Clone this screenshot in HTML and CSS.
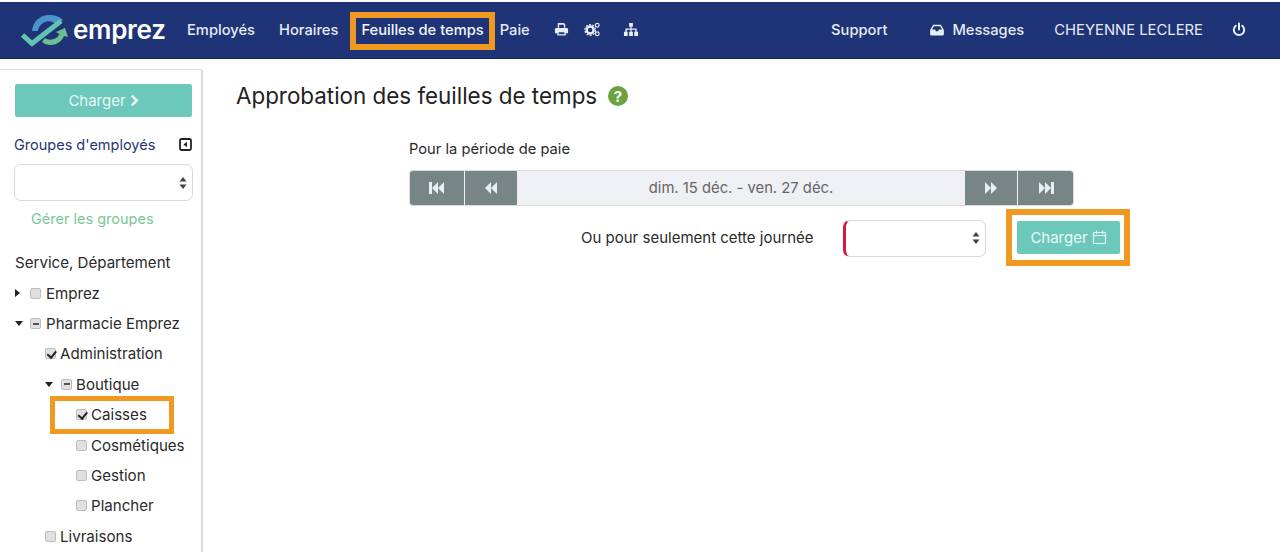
FILE: index.html
```html
<!DOCTYPE html>
<html lang="fr">
<head>
<meta charset="utf-8">
<title>Emprez</title>
<link rel="stylesheet" href="styles.css">
</head>
<body>
<nav class="topbar">
  <a class="logo">
    <svg class="logo-mark" viewBox="0 0 50 36" width="50" height="36">
      <path d="M12 19 C13 8 22 2 31 3 C36 3.500 40 5 43 8 L37 13 C33 9 27 8 23 11 C20 13 18 16 18 19 Z" fill="#4a94cc"/>
      <path d="M2.500 23 L12 31.500 L41 9" fill="none" stroke="#62c2b4" stroke-width="5"/>
      <path d="M22 30 C28 35 40 34 44 24 L48 25 L45 16 L36 20 L39.500 22 C37 28 29 29 25 26 Z" fill="#6cc08e"/>
    </svg>
    <span class="logo-text">emprez</span>
  </a>
  <a class="nav-link nav-employes">Employés</a>
  <a class="nav-link nav-horaires">Horaires</a>
  <a class="nav-link nav-feuilles">Feuilles de temps</a>
  <a class="nav-link nav-paie">Paie</a>
  <a class="nav-icon nav-print"><svg viewBox="0 0 16 16" width="15" height="15"><path fill="#e9edf6" d="M4 1h6.500L12 2.500V6h-1.500V3H5.500v3H4zM2.500 6.500h11A1.500 1.500 0 0 1 15 8v4h-2.500v2.500h-9V12H1V8a1.500 1.500 0 0 1 1.500-1.500zM5 11v2h6v-2z"/></svg></a>
  <a class="nav-icon nav-cogs"><svg viewBox="0 0 18 16" width="17" height="15"><circle cx="6.500" cy="8.500" r="3.700" fill="none" stroke="#e9edf6" stroke-width="2.600"/><circle cx="6.500" cy="8.500" r="5.600" fill="none" stroke="#e9edf6" stroke-width="1.400" stroke-dasharray="2 1.500"/><circle cx="14" cy="3.500" r="2" fill="none" stroke="#e9edf6" stroke-width="1.300"/><circle cx="14" cy="12.500" r="2" fill="none" stroke="#e9edf6" stroke-width="1.300"/></svg></a>
  <a class="nav-icon nav-tree"><svg viewBox="0 0 16 16" width="16" height="15"><path fill="#e9edf6" d="M6 1h4v4H8.600v2H14v3.500h1.500V15h-4v-4.500h1V8.300H8.600v2.200H10V15H6v-4.500h1.400V8.300H3.500v2.200h1V15h-4v-4.500H2V7h5.400V5H6z"/></svg></a>
  <a class="nav-link nav-support">Support</a>
  <a class="nav-link nav-messages"><svg viewBox="0 0 16 14" width="14" height="12"><path fill="#e9edf6" d="M3.500 1h9L16 7v5a1.500 1.500 0 0 1-1.500 1.500h-13A1.500 1.500 0 0 1 0 12V7zM4.300 2.500 2.200 6.500h3.500l1 2h2.600l1-2h3.500l-2.100-4z"/></svg>Messages</a>
  <a class="nav-link nav-user">CHEYENNE LECLERE</a>
  <a class="nav-icon nav-power"><svg viewBox="0 0 14 15" width="14" height="15"><path fill="none" stroke="#e9edf6" stroke-width="2" stroke-linecap="round" d="M7 1.500v6M3.800 3.800a5.200 5.200 0 1 0 6.400 0"/></svg></a>
</nav>

<div class="page">
  <aside class="sidebar">
    <button class="btn btn-side">Charger <svg viewBox="0 0 10 14" width="9" height="13"><path d="M2 1.500 7.500 7 2 12.500" fill="none" stroke="#e9f7f4" stroke-width="2.800"/></svg></button>
    <div class="groups-head">
      <span class="groups-title">Groupes d'employés</span>
      <span class="collapse"><svg viewBox="0 0 13 13" width="13" height="13"><rect x="1" y="1" width="11" height="11" rx="1.500" fill="none" stroke="#222" stroke-width="1.800"/><path d="M8 3.800v5.400L4.500 6.500z" fill="#222"/></svg></span>
    </div>
    <div class="select select-groups"><svg class="updown" viewBox="0 0 8 14" width="8" height="14"><path d="M4 1 7.500 5.500h-7zM4 13 .5 8.500h7z" fill="#444"/></svg></div>
    <a class="manage">Gérer les groupes</a>
    <div class="service">Service, Département</div>
    <ul class="tree">
      <li class="row lvl0"><span class="arrow arrow-right"></span><span class="box"></span>Emprez</li>
      <li class="row lvl0"><span class="arrow arrow-down"></span><span class="box mixed"></span>Pharmacie Emprez</li>
      <li class="row lvl1"><span class="box checked"></span>Administration</li>
      <li class="row lvl1"><span class="arrow arrow-down"></span><span class="box mixed"></span>Boutique</li>
      <li class="row lvl2"><span class="box checked"></span>Caisses<span class="mark mark-caisses"></span></li>
      <li class="row lvl2"><span class="box"></span>Cosmétiques</li>
      <li class="row lvl2"><span class="box"></span>Gestion</li>
      <li class="row lvl2"><span class="box"></span>Plancher</li>
      <li class="row lvl1"><span class="box"></span>Livraisons</li>
    </ul>
  </aside>
  <main class="content">
    <h1 class="title">Approbation des feuilles de temps <svg viewBox="0 0 20 20" width="20" height="20"><circle cx="10" cy="10" r="10" fill="#6aa33f"/><text x="10" y="15.500" text-anchor="middle" class="help-q">?</text></svg></h1>
    <div class="period">
      <div class="period-label">Pour la période de paie</div>
      <div class="pager">
        <button class="pg pg-first"><svg viewBox="0 0 16 12" width="16" height="12"><path fill="#e9edf6" d="M0 0h3v12H0zM3 6l6-6v12zM9 6l6-6v12z"/></svg></button>
        <button class="pg pg-second"><svg viewBox="0 0 14 12" width="14" height="12"><path fill="#e9edf6" d="M1 6l6-6v12zM7 6l6-6v12z"/></svg></button>
        <div class="range">dim. 15 déc. - ven. 27 déc.</div>
        <button class="pg pg-second"><svg viewBox="0 0 14 12" width="14" height="12"><path fill="#e9edf6" d="M1 0l6 6-6 6zM7 0l6 6-6 6z"/></svg></button>
        <button class="pg pg-last"><svg viewBox="0 0 16 12" width="16" height="12"><path fill="#e9edf6" d="M1 0l6 6-6 6zM7 0l6 6-6 6zM13 0h3v12h-3z"/></svg></button>
      </div>
      <div class="day-row">
        <span class="day-label">Ou pour seulement cette journée</span>
        <div class="select select-day"><svg class="updown" viewBox="0 0 8 14" width="8" height="14"><path d="M4 1 7.500 5.500h-7zM4 13 .5 8.500h7z" fill="#444"/></svg></div>
        <div class="mark-wrap">
          <button class="btn btn-day">Charger <svg viewBox="0 0 15 15" width="15" height="15"><path fill="none" stroke="#e9f7f4" stroke-width="1.200" d="M2.500 2.500h10a1 1 0 0 1 1 1v9a1 1 0 0 1-1 1h-10a1 1 0 0 1-1-1v-9a1 1 0 0 1 1-1zM4.500 .500v3.500M10.500 .500v3.500M1.500 5.500h12"/></svg></button>
        </div>
      </div>
    </div>
  </main>
</div>
</body>
</html>
```
FILE: styles.css
```css
* { box-sizing: border-box; }
html, body { margin: 0; padding: 0; height: 558px; overflow: hidden; background: #fff; }
body { font-family: Inter, "Liberation Sans", sans-serif; font-size: 15.100px; color: #2a2a2a; }
a { text-decoration: none; }
ul { list-style: none; margin: 0; padding: 0; }
button { font-family: inherit; border: 0; cursor: pointer; }

.topbar { height: 57px; margin-top: 2px; background: #1f3476; border-bottom: 1px solid #16265c; display: flex; align-items: center; color: #e9edf6; padding: 0 0 1px 20px; font-size: 14.700px; line-height: 18px; }
.logo { display: flex; align-items: center; gap: 3px; width: 167px; color: #fff; }
.logo-text { font-weight: 600; font-size: 26px; letter-spacing: -.3px; line-height: 1; }
.nav-link { display: flex; align-items: center; gap: 8px; color: #e6eaf4; font-weight: 500; white-space: nowrap; }
.nav-icon { display: flex; align-items: center; }
.nav-horaires { margin-left: 24px; }
.nav-feuilles { margin-left: 23px; position: relative; color: #f4f6fb; }
.nav-feuilles::after { content: ""; position: absolute; left: -11px; right: -11px; top: -9px; bottom: -11px; border: 6px solid #f0981f; }
.nav-paie { margin-left: 16px; }
.nav-print { margin-left: 24px; }
.nav-cogs { margin-left: 15px; }
.nav-tree { margin-left: 22px; }
.nav-support { margin-left: auto; }
.nav-messages { margin-left: 43px; }
.nav-user { margin-left: 30px; font-weight: 400; font-size: 14.800px; }
.nav-power { margin-left: 29px; margin-right: 34px; }

.page { display: flex; height: 493px; }
.sidebar { width: 203px; margin-top: 10px; border-top: 1px solid #dcdcdc; border-right: 2px solid #dcdcdc; border-top-right-radius: 3px; padding: 14px 9px 0 15px; flex-shrink: 0; }
.btn { background: #6cc8bb; color: #e9f7f4; border-radius: 2px; display: flex; align-items: center; justify-content: center; gap: 4px; font-size: 15px; }
.btn-side { width: 177px; height: 33px; }
.groups-head { display: flex; align-items: center; justify-content: space-between; margin-top: 16px; height: 22px; }
.groups-title { color: #1f3476; font-size: 14.500px; margin-left: -1px; }
.collapse { display: flex; }
.select { border: 1px solid #d9d9d9; border-radius: 7px; background: #fff; display: flex; align-items: center; justify-content: flex-end; padding-right: 5px; flex-shrink: 0; }
.select-groups { width: 179px; height: 37px; margin: 9px 0 0 -1px; }
.manage { display: block; margin-top: 7px; padding-left: 16px; color: #79c796; height: 22px; line-height: 22px; font-size: 14.500px; }
.service { margin-top: 22px; height: 22px; line-height: 22px; }
.tree { margin-top: 4px; }
.row { display: flex; align-items: center; height: 30.400px; white-space: nowrap; position: relative; }
.lvl1 { padding-left: 30px; }
.lvl2 { padding-left: 61px; }
.lvl0 .box { margin-left: 10px; }
.arrow { width: 0; height: 0; display: inline-block; }
.arrow-right { border-left: 5px solid #222; border-top: 4px solid transparent; border-bottom: 4px solid transparent; }
.arrow-down { border-top: 5px solid #222; border-left: 4.500px solid transparent; border-right: 4.500px solid transparent; }
.lvl0 .arrow-down + .box { margin-left: 7px; }
.lvl1 .arrow-down + .box { margin-left: 8px; }
.box { width: 11px; height: 11px; margin-right: 4px; border-radius: 2px; background: #e0e0e0; border: 1px solid #bdbdbd; position: relative; flex-shrink: 0; }
.lvl0 .box { margin-right: 5px; }
.box.mixed::after { content: ""; position: absolute; left: 1.500px; right: 1.500px; top: 3.500px; height: 2px; background: #555; }
.box.checked::after { content: ""; position: absolute; left: 3px; top: 0; width: 3.500px; height: 6.500px; border: solid #222; border-width: 0 2px 2px 0; transform: rotate(40deg); }
.mark { position: absolute; border: 5px solid #f0981f; }
.mark-caisses { left: 35px; top: -4px; width: 124px; height: 38px; }

.content { flex: 1; padding-left: 33px; }
.title { margin: 24px 0 0; font-size: 22.400px; font-weight: 400; line-height: 26px; color: #222; display: flex; align-items: center; gap: 11px; }
.help-q { font: 700 15px Inter, sans-serif; fill: #fff; }
.period { margin-left: 173px; width: 665px; margin-top: 30px; font-size: 14.700px; }
.period-label { height: 20px; line-height: 20px; }
.pager { margin-top: 11px; display: flex; height: 36px; border: 1px solid #dcdcdc; border-radius: 3px; background: #eef0f3; }
.pg { background: #778685; display: flex; align-items: center; justify-content: center; height: 100%; padding: 0; }
.pg-first { width: 54px; margin-right: 1px; border-radius: 3px 0 0 3px; }
.pg-second { width: 52px; }
.pg-last { width: 55px; margin-left: 1px; border-radius: 0 3px 3px 0; }
.range { flex: 1; text-align: center; line-height: 34px; color: #666; font-size: 14.800px; }
.day-row { display: flex; align-items: center; margin-top: 13px; height: 38px; position: relative; }
.day-label { margin: -1px 0 0 172px; width: 262px; flex-shrink: 0; font-size: 15px; }
.select-day { width: 143px; height: 37px; border-left: 3px solid #d6193e; }
.mark-wrap { margin: -2px 0 0 31px; position: relative; flex-shrink: 0; }
.mark-wrap::after { content: ""; position: absolute; left: -11px; right: -10px; top: -12px; bottom: -12px; border: 6px solid #f0981f; pointer-events: none; }
.btn-day { width: 103px; height: 33px; }
```
